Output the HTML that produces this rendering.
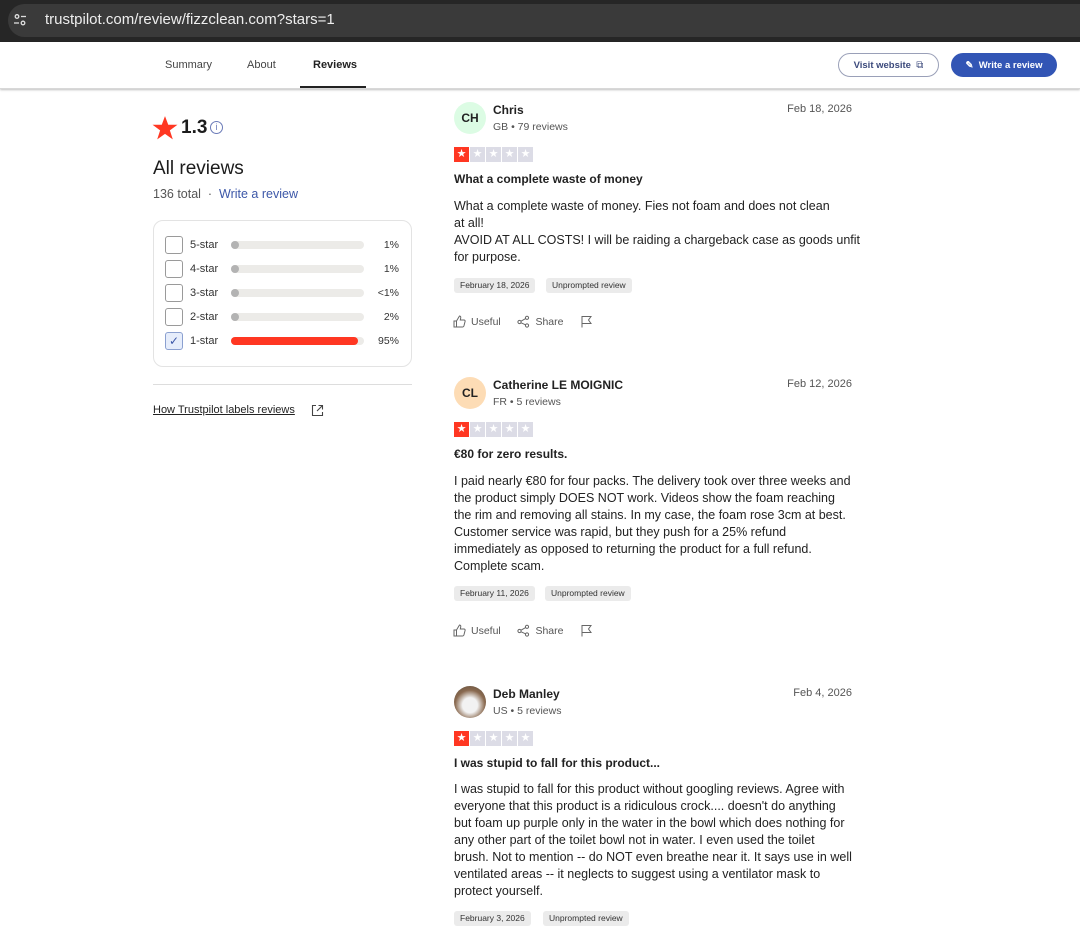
<!DOCTYPE html>
<html><head><meta charset="utf-8">
<style>
*{margin:0;padding:0;box-sizing:border-box}
body{width:1080px;height:943px;overflow:hidden;background:#fff;font-family:"Liberation Sans",sans-serif;color:#1c1c1c;position:relative}
.a{position:absolute;white-space:nowrap}
.top{position:absolute;left:0;top:0;width:1080px;height:42px;background:#262626}
.url{position:absolute;left:8px;top:4px;width:1072px;height:33px;background:#3a3a3a;border-radius:17px 0 0 17px}
.nav{position:absolute;left:0;top:42px;width:1080px;height:47px;background:#fff;box-shadow:0 1px 2px rgba(0,0,0,.25);border-bottom:1px solid #d8d8d8}
.tab{font-size:11px;color:#444;top:59px}
.btn{position:absolute;top:53px;height:24px;border-radius:12px;font-size:9.5px;font-weight:bold;display:flex;align-items:center;justify-content:center}
.row{position:absolute;left:165px;height:18px;width:236px}
.cb{position:absolute;left:0;top:0;width:18px;height:18px;border:1px solid #9a9a9a;border-radius:3px;background:#fff}
.lbl{position:absolute;left:25px;top:3px;font-size:11px;color:#333}
.bar{position:absolute;left:66px;top:5px;width:133px;height:8px;background:#ecebe8;border-radius:4px}
.dot{position:absolute;left:0;top:0;width:8px;height:8px;border-radius:4px;background:#b3b3b3}
.pct{position:absolute;right:2px;top:3px;font-size:10.5px;color:#333}
.av{position:absolute;left:454px;width:32px;height:32px;border-radius:16px;font-size:12px;font-weight:bold;display:flex;align-items:center;justify-content:center;color:#222}
.name{font-size:12px;font-weight:bold;left:493px;color:#222}
.sub{font-size:10.5px;left:493px;color:#555}
.date{font-size:11px;right:228px;color:#555}
.stars{position:absolute;left:454px;display:flex;gap:1px}
.stars span{width:15px;height:15px;background:#dcdce6;color:#fff;font-size:11px;line-height:15px;text-align:center}
.stars span:first-child{background:#ff3722}
.ttl{left:454px;font-size:12px;font-weight:bold;color:#222}
.body{left:454px;font-size:12.5px;line-height:17px;color:#222}
.tag{position:absolute;height:15px;background:#ebebeb;border-radius:3px;font-size:8.5px;color:#333;line-height:15px;padding:0 6px}
.act{font-size:10.5px;color:#555;display:flex;align-items:center;gap:5px}
</style></head><body>
<div class="top"><div class="url"></div>
<svg class="a" style="left:12px;top:12px" width="16" height="16" viewBox="0 0 16 16" fill="none" stroke="#ddd" stroke-width="1.3"><circle cx="5" cy="4.5" r="1.8"/><line x1="9" y1="4.5" x2="14" y2="4.5"/><circle cx="11" cy="11" r="1.8"/><line x1="2" y1="11" x2="7" y2="11"/></svg>
<div class="a" style="left:45px;top:11px;font-size:15px;color:#eee">trustpilot.com/review/fizzclean.com?stars=1</div></div>
<div class="nav"></div>
<div class="a tab" style="left:165px">Summary</div>
<div class="a tab" style="left:247px">About</div>
<div class="a tab" style="left:313px;font-weight:bold;color:#222">Reviews</div>
<div class="a" style="left:300px;top:86px;width:66px;height:2px;background:#222"></div>
<div class="btn" style="left:838px;width:101px;border:1px solid #9aa0b8;color:#3c4a7c">Visit website&nbsp;&nbsp;<span style="font-weight:normal;font-size:10px">⧉</span></div>
<div class="btn" style="left:951px;width:106px;background:#3255b5;color:#fff">✎&nbsp; Write a review</div>

<svg class="a" style="left:152px;top:115px" width="26" height="26" viewBox="0 0 24 24"><path fill="#ff3722" d="M12 1l3 8h8.5l-7 5.2 2.7 8.3L12 17.4l-7.2 5.1 2.7-8.3-7-5.2H9z"/></svg>
<div class="a" style="left:181px;top:117px;font-size:19px;font-weight:bold;color:#1c1c1c">1.3</div>
<div class="a" style="left:210px;top:121px;width:13px;height:13px;border:1px solid #6b7bb8;border-radius:7px;font-size:9px;color:#6b7bb8;text-align:center;line-height:11px">i</div>
<div class="a" style="left:153px;top:158px;font-size:19px;color:#1c1c1c">All reviews</div>
<div class="a" style="left:153px;top:187px;font-size:12.5px;color:#555">136 total &nbsp;·&nbsp; <span style="color:#3c57a8">Write a review</span></div>
<div class="a" style="left:153px;top:220px;width:259px;height:147px;border:1px solid #e3e3e3;border-radius:10px"></div>
<div class="row" style="top:236px"><div class="cb"></div><div class="lbl">5-star</div><div class="bar"><div class="dot"></div></div><div class="pct">1%</div></div>
<div class="row" style="top:260px"><div class="cb"></div><div class="lbl">4-star</div><div class="bar"><div class="dot"></div></div><div class="pct">1%</div></div>
<div class="row" style="top:284px"><div class="cb"></div><div class="lbl">3-star</div><div class="bar"><div class="dot"></div></div><div class="pct">&lt;1%</div></div>
<div class="row" style="top:308px"><div class="cb"></div><div class="lbl">2-star</div><div class="bar"><div class="dot"></div></div><div class="pct">2%</div></div>
<div class="row" style="top:332px"><div class="cb" style="background:#e6edfb;border-color:#8ba0d0;color:#3c57a8;font-size:12px;text-align:center;line-height:16px">✓</div><div class="lbl">1-star</div><div class="bar"><div class="dot" style="width:127px;background:#ff3722"></div></div><div class="pct">95%</div></div>
<div class="a" style="left:153px;top:384px;width:259px;height:1px;background:#ddd"></div>
<div class="a" style="left:153px;top:404px;font-size:11px;color:#222;text-decoration:underline">How Trustpilot labels reviews</div>
<svg class="a" style="left:311px;top:404px" width="13" height="13" viewBox="0 0 13 13" fill="none" stroke="#444" stroke-width="1.1"><path d="M5 1.5H1.5v10h10V8M7.5 1.5h4v4M11.5 1.5L6 7"/></svg>

<!-- review 1 -->
<div class="av" style="top:102px;background:#dcfce4">CH</div>
<div class="a name" style="top:103px">Chris</div>
<div class="a sub" style="top:121px">GB • 79 reviews</div>
<div class="a date" style="top:103px">Feb 18, 2026</div>
<div class="stars" style="top:147px"><span>★</span><span>★</span><span>★</span><span>★</span><span>★</span></div>
<div class="a ttl" style="top:172px">What a complete waste of money</div>
<div class="a body" style="top:198px">What a complete waste of money. Fies not foam and does not clean<br>at all!<br>AVOID AT ALL COSTS! I will be raiding a chargeback case as goods unfit<br>for purpose.</div>
<div class="tag" style="left:454px;top:278px">February 18, 2026</div>
<div class="tag" style="left:546px;top:278px">Unprompted review</div>
<div class="a act" style="left:453px;top:315px"><svg width="13" height="13" viewBox="0 0 13 13" fill="none" stroke="#666" stroke-width="1"><path d="M1 6h2.5v6H1zM3.5 6l3-5c1 0 1.5.8 1.2 2L7.3 5H11c.8 0 1.3.7 1.1 1.4l-1.2 4.6c-.2.6-.6 1-1.2 1H3.5"/></svg>Useful&nbsp;&nbsp;&nbsp;&nbsp;<svg width="13" height="13" viewBox="0 0 13 13" fill="none" stroke="#666" stroke-width="1"><circle cx="2.5" cy="7" r="1.6"/><circle cx="10" cy="2.8" r="1.6"/><circle cx="10" cy="10.5" r="1.6"/><path d="M4 6.2l4.6-2.6M4 7.8l4.6 2"/></svg>Share&nbsp;&nbsp;&nbsp;&nbsp;<svg width="13" height="13" viewBox="0 0 13 13" fill="none" stroke="#666" stroke-width="1"><path d="M2 12.5V1.5h9L8.5 5 11 8.5H2"/></svg></div>

<!-- review 2 -->
<div class="av" style="top:377px;background:#fddcb5">CL</div>
<div class="a name" style="top:378px">Catherine LE MOIGNIC</div>
<div class="a sub" style="top:396px">FR • 5 reviews</div>
<div class="a date" style="top:378px">Feb 12, 2026</div>
<div class="stars" style="top:422px"><span>★</span><span>★</span><span>★</span><span>★</span><span>★</span></div>
<div class="a ttl" style="top:447px">€80 for zero results.</div>
<div class="a body" style="top:473px">I paid nearly €80 for four packs. The delivery took over three weeks and<br>the product simply DOES NOT work. Videos show the foam reaching<br>the rim and removing all stains. In my case, the foam rose 3cm at best.<br>Customer service was rapid, but they push for a 25% refund<br>immediately as opposed to returning the product for a full refund.<br>Complete scam.</div>
<div class="tag" style="left:454px;top:586px">February 11, 2026</div>
<div class="tag" style="left:545px;top:586px">Unprompted review</div>
<div class="a act" style="left:453px;top:624px"><svg width="13" height="13" viewBox="0 0 13 13" fill="none" stroke="#666" stroke-width="1"><path d="M1 6h2.5v6H1zM3.5 6l3-5c1 0 1.5.8 1.2 2L7.3 5H11c.8 0 1.3.7 1.1 1.4l-1.2 4.6c-.2.6-.6 1-1.2 1H3.5"/></svg>Useful&nbsp;&nbsp;&nbsp;&nbsp;<svg width="13" height="13" viewBox="0 0 13 13" fill="none" stroke="#666" stroke-width="1"><circle cx="2.5" cy="7" r="1.6"/><circle cx="10" cy="2.8" r="1.6"/><circle cx="10" cy="10.5" r="1.6"/><path d="M4 6.2l4.6-2.6M4 7.8l4.6 2"/></svg>Share&nbsp;&nbsp;&nbsp;&nbsp;<svg width="13" height="13" viewBox="0 0 13 13" fill="none" stroke="#666" stroke-width="1"><path d="M2 12.5V1.5h9L8.5 5 11 8.5H2"/></svg></div>

<!-- review 3 -->
<div class="av" style="top:686px;background:radial-gradient(circle at 50% 60%,#f2f2f2 30%,#8a6a50 60%,#5a4a3a)"></div>
<div class="a name" style="top:687px">Deb Manley</div>
<div class="a sub" style="top:705px">US • 5 reviews</div>
<div class="a date" style="top:687px">Feb 4, 2026</div>
<div class="stars" style="top:731px"><span>★</span><span>★</span><span>★</span><span>★</span><span>★</span></div>
<div class="a ttl" style="top:756px">I was stupid to fall for this product...</div>
<div class="a body" style="top:781px">I was stupid to fall for this product without googling reviews. Agree with<br>everyone that this product is a ridiculous crock.... doesn't do anything<br>but foam up purple only in the water in the bowl which does nothing for<br>any other part of the toilet bowl not in water. I even used the toilet<br>brush. Not to mention -- do NOT even breathe near it. It says use in well<br>ventilated areas -- it neglects to suggest using a ventilator mask to<br>protect yourself.</div>
<div class="tag" style="left:454px;top:911px">February 3, 2026</div>
<div class="tag" style="left:543px;top:911px">Unprompted review</div>
</body></html>
